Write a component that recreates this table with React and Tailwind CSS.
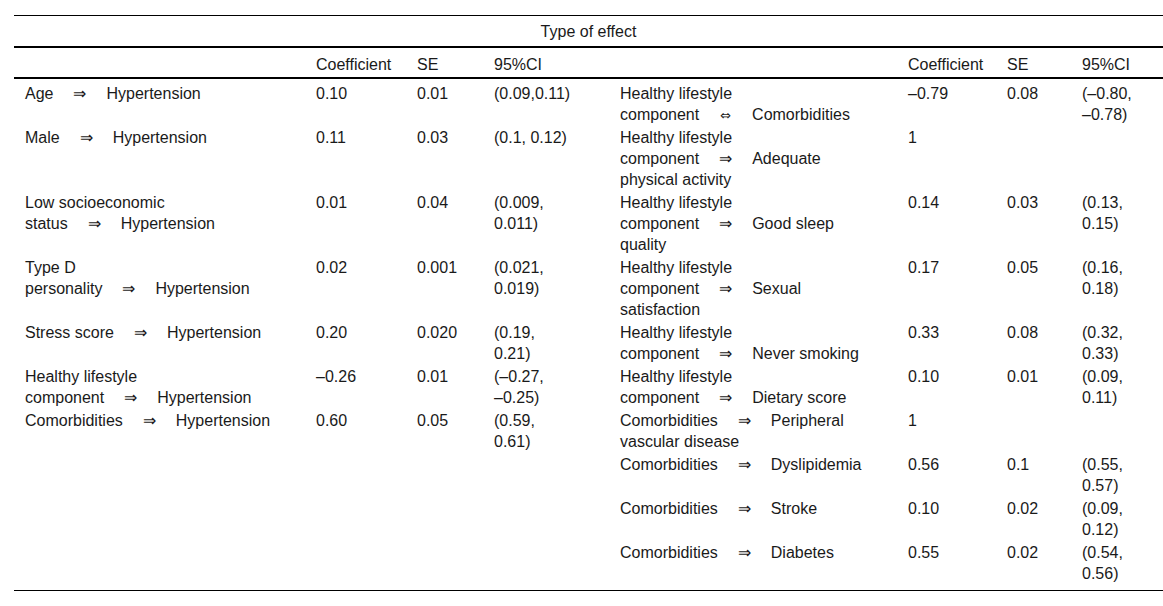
const cols = "grid grid-cols-[292px_101px_77px_126px_288px_99px_75px_90px]";

function Arr() {
  return <span className="mx-[20px]">⇒</span>;
}

function Both() {
  return (
    <span className="ml-[21px] mr-[21px] leading-none font-['DejaVu_Sans',sans-serif] text-[13px]">
      ⇔
    </span>
  );
}

const rows = [
  {
    l: [<>Age<Arr />Hypertension</>, "0.10", "0.01", "(0.09,0.11)"],
    r: [<>Healthy lifestyle<br />component<Both />Comorbidities</>, "–0.79", "0.08", <>(–0.80,<br />–0.78)</>],
  },
  {
    l: [<>Male<Arr />Hypertension</>, "0.11", "0.03", "(0.1, 0.12)"],
    r: [<>Healthy lifestyle<br />component<Arr />Adequate<br />physical activity</>, "1", "", ""],
  },
  {
    l: [<>Low socioeconomic<br />status<Arr />Hypertension</>, "0.01", "0.04", <>(0.009,<br />0.011)</>],
    r: [<>Healthy lifestyle<br />component<Arr />Good sleep<br />quality</>, "0.14", "0.03", <>(0.13,<br />0.15)</>],
  },
  {
    l: [<>Type D<br />personality<Arr />Hypertension</>, "0.02", "0.001", <>(0.021,<br />0.019)</>],
    r: [<>Healthy lifestyle<br />component<Arr />Sexual<br />satisfaction</>, "0.17", "0.05", <>(0.16,<br />0.18)</>],
  },
  {
    l: [<>Stress score<Arr />Hypertension</>, "0.20", "0.020", <>(0.19,<br />0.21)</>],
    r: [<>Healthy lifestyle<br />component<Arr />Never smoking</>, "0.33", "0.08", <>(0.32,<br />0.33)</>],
  },
  {
    l: [<>Healthy lifestyle<br />component<Arr />Hypertension</>, "–0.26", "0.01", <>(–0.27,<br />–0.25)</>],
    r: [<>Healthy lifestyle<br />component<Arr />Dietary score</>, "0.10", "0.01", <>(0.09,<br />0.11)</>],
  },
  {
    l: [<>Comorbidities<Arr />Hypertension</>, "0.60", "0.05", <>(0.59,<br />0.61)</>],
    r: [<>Comorbidities<Arr />Peripheral<br />vascular disease</>, "1", "", ""],
  },
  {
    l: ["", "", "", ""],
    r: [<>Comorbidities<Arr />Dyslipidemia</>, "0.56", "0.1", <>(0.55,<br />0.57)</>],
  },
  {
    l: ["", "", "", ""],
    r: [<>Comorbidities<Arr />Stroke</>, "0.10", "0.02", <>(0.09,<br />0.12)</>],
  },
  {
    l: ["", "", "", ""],
    r: [<>Comorbidities<Arr />Diabetes</>, "0.55", "0.02", <>(0.54,<br />0.56)</>],
  },
];

export default function App() {
  return (
    <div className="min-h-screen bg-white pt-[15px] text-[16px] text-[#1a1a1a] font-['Liberation_Sans',Arial,sans-serif]">
      <div className="ml-[14px] w-[1149px] border-t border-black">
        <div className="h-[32px] pt-[2px] flex items-center justify-center border-b-2 border-black">
          Type of effect
        </div>

        <div className={`${cols} h-[31px] pt-[4px] items-center border-b-2 border-black`}>
          <div />
          <div className="pl-[10px]">Coefficient</div>
          <div className="pl-[10px]">SE</div>
          <div className="pl-[10px]">95%CI</div>
          <div />
          <div className="pl-[10px]">Coefficient</div>
          <div className="pl-[10px]">SE</div>
          <div className="pl-[10px]">95%CI</div>
        </div>

        <div className="pt-[3px] pb-[5px] border-b border-black">
          {rows.map((row, i) => (
            <div key={i} className={`${cols} py-px leading-[21px]`}>
              {[...row.l, ...row.r].map((c, j) => (
                <div key={j} className={j === 0 ? "pl-[11px]" : "pl-[10px]"}>
                  {c}
                </div>
              ))}
            </div>
          ))}
        </div>
      </div>
    </div>
  );
}
